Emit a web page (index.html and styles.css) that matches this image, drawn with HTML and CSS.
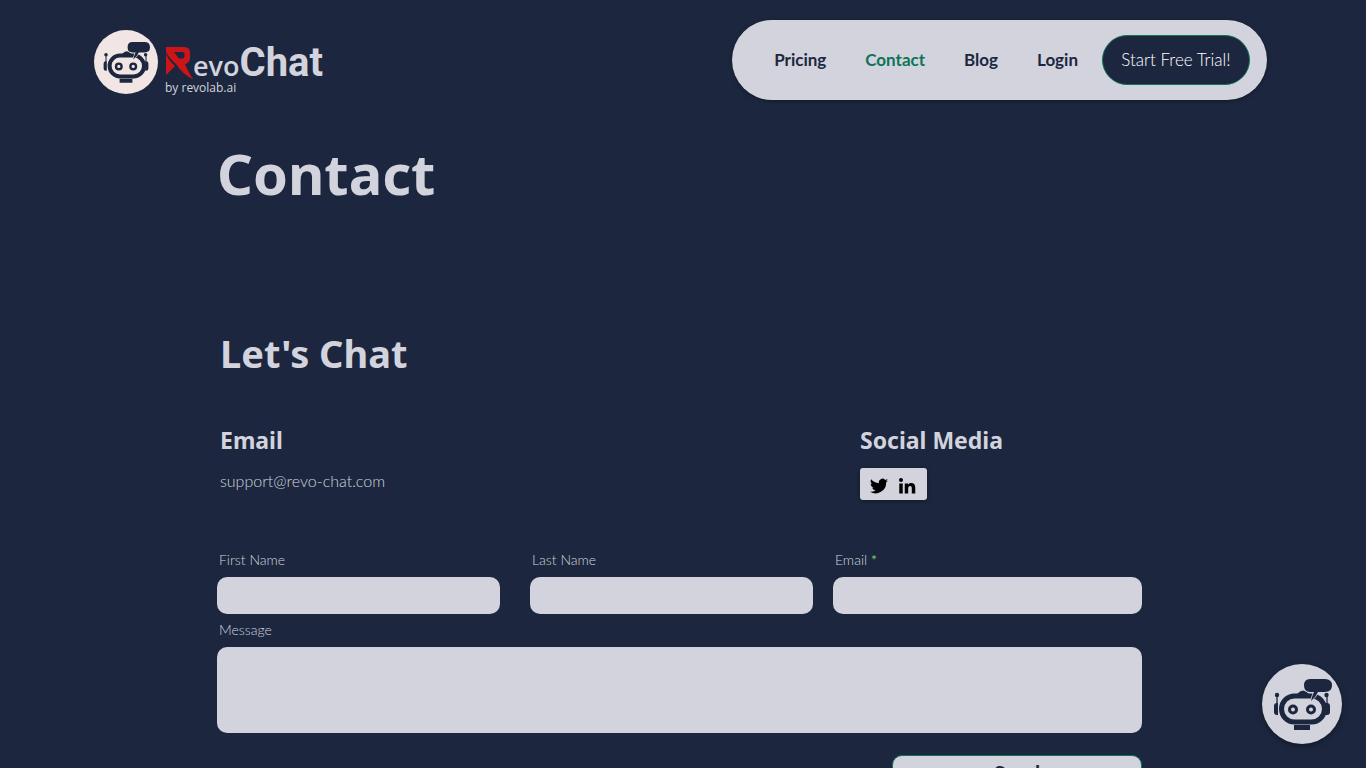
FILE: index.html
```html
<!DOCTYPE html>
<html lang="en">
<head>
<meta charset="utf-8">
<meta name="viewport" content="width=device-width, initial-scale=1">
<title>Contact | RevoChat</title>
<link rel="stylesheet" href="styles.css">
</head>
<body>
<svg width="0" height="0" class="sprite" aria-hidden="true">
  <symbol id="robot" viewBox="0 0 80 80">
    <path d="M35 30q6-7 12 0z" fill="currentColor"/>
    <rect x="19.500" y="32" width="43" height="26" rx="13" fill="none" stroke="currentColor" stroke-width="5"/>
    <circle cx="31" cy="45.500" r="3.500" fill="none" stroke="currentColor" stroke-width="3"/>
    <circle cx="49" cy="45.500" r="3.500" fill="none" stroke="currentColor" stroke-width="3"/>
    <path d="M16 39h-1q-3 0-3 3v6q0 3 3 3h1zM64 39h1q3 0 3 3v6q0 3-3 3h-1z" fill="currentColor"/>
    <path d="M15 40V31M65 40V31" stroke="currentColor" stroke-width="1.300"/>
    <circle cx="15" cy="31" r="2.200" fill="currentColor"/>
    <circle cx="64.500" cy="31" r="2.200" fill="currentColor"/>
    <path d="M32 61h16v5H32z" fill="currentColor"/>
    <path d="M48 15h15q7 0 7 6.500t-7 6.500h-7q-2 5-7 9 1-5 3-9h-4q-6 0-6-6.500t6-6.500z" fill="currentColor" stroke="var(--face)" stroke-width="1.500" paint-order="stroke"/>
  </symbol>
</svg>

<header class="header">
  <a class="brand" href="#" aria-label="RevoChat by revolab.ai">
    <svg class="brand-badge"><use href="#robot"/></svg>
    <span class="brand-text">
      <span class="wordmark">
        <svg class="brand-r" viewBox="0 0 28 33" aria-hidden="true">
          <path d="M1 1h19q5 1 5 5v6q0 5-5 6 3 8 8 15-10-4-17-15Q4 12 1 6z" fill="#cb1518"/>
          <path d="M1 8q3 7 9 12l-9 9z" fill="#cb1518"/>
          <path d="M9 6h9l1.500 1.500V11L18 12.500h-4z" fill="#1c273f"/>
        </svg>
        <span class="evo">evo</span><span class="chat">Chat</span>
      </span>
      <span class="byline">by revolab.ai</span>
    </span>
  </a>
  <nav class="nav">
    <a href="#">Pricing</a>
    <a href="#" class="active" aria-current="page">Contact</a>
    <a href="#">Blog</a>
    <a href="#">Login</a>
    <a href="#" class="trial">Start Free Trial!</a>
  </nav>
</header>

<main class="main">
  <h1>Contact</h1>
  <h2>Let's Chat</h2>
  <div class="info">
    <section>
      <h3>Email</h3>
      <a class="mail" href="mailto:support@revo-chat.com">support@revo-chat.com</a>
    </section>
    <section class="social-block">
      <h3>Social Media</h3>
      <div class="social">
        <a href="#" aria-label="Twitter"><svg viewBox="0 0 24 24"><path d="M24 4.600a10 10 0 0 1-2.800.8 5 5 0 0 0 2.200-2.700 10 10 0 0 1-3.100 1.200 4.900 4.900 0 0 0-8.400 4.500A14 14 0 0 1 1.700 3.100a4.900 4.900 0 0 0 1.500 6.600 5 5 0 0 1-2.200-.6 4.900 4.900 0 0 0 3.900 4.900 5 5 0 0 1-2.200.1 4.900 4.900 0 0 0 4.600 3.400A9.900 9.900 0 0 1 0 19.500 14 14 0 0 0 21.500 7.100 10 10 0 0 0 24 4.600z"/></svg></a>
        <a href="#" aria-label="LinkedIn"><svg viewBox="0 0 24 24"><circle cx="4" cy="4" r="2.700"/><path d="M1.700 8.500h4.600V22H1.700zM9 8.500h4.400v1.900c.8-1.400 2.300-2.300 4.200-2.300 4 0 5.400 2.400 5.400 6.300V22h-4.600v-6.900c0-2-.6-3.100-2.200-3.100-1.800 0-2.600 1.300-2.600 3.200V22H9z"/></svg></a>
      </div>
    </section>
  </div>

  <form class="form">
    <div class="row">
      <div class="names">
        <div class="field">
          <label for="first">First Name</label>
          <input id="first" type="text">
        </div>
        <div class="field">
          <label for="last">Last Name</label>
          <input id="last" type="text">
        </div>
      </div>
      <div class="field email">
        <label for="email">Email <span class="req">*</span></label>
        <input id="email" type="email" required>
      </div>
    </div>
    <div class="field">
      <label for="message">Message</label>
      <textarea id="message"></textarea>
    </div>
    <button class="send" type="submit">Send</button>
  </form>
</main>

<button class="chat-button" type="button" aria-label="Open chat"><svg><use href="#robot"/></svg></button>
</body>
</html>
```
FILE: styles.css
```css
:root {
  --navy: #1c273f;
  --light: #d2d3dc;
  --green: #0d7458;
}

* {
  box-sizing: border-box;
}

body {
  margin: 0;
  background: var(--navy);
  color: var(--light);
  font-family: Lato, "Open Sans", sans-serif;
}

a {
  color: inherit;
  text-decoration: none;
}

.sprite {
  position: absolute;
}

.header {
  display: flex;
  justify-content: space-between;
  align-items: flex-start;
  padding: 20px 99px 0 94px;
}

.brand {
  display: flex;
  gap: 7px;
  padding-top: 10px;
}

.brand-badge {
  --face: #f1e6e4;
  width: 64px;
  height: 64px;
  border-radius: 50%;
  background: var(--face);
  color: var(--navy);
}

.brand-text {
  display: flex;
  flex-direction: column;
  padding-top: 13px;
}

.wordmark {
  display: flex;
  align-items: baseline;
  height: 36px;
  line-height: 40px;
  font-weight: 700;
}

.brand-r {
  width: 28px;
  height: 33px;
  align-self: flex-end;
}

.evo {
  font-family: "Open Sans", sans-serif;
  font-size: 27px;
  font-weight: 600;
}

.chat {
  font-family: Roboto, sans-serif;
  font-size: 40px;
}

.byline {
  font: 12px/18px "Open Sans", sans-serif;
}

.nav {
  display: flex;
  align-items: center;
  gap: 39px;
  height: 80px;
  padding: 0 17px 0 42px;
  border-radius: 40px;
  background: var(--light);
  color: var(--navy);
  font-size: 17px;
  font-weight: 700;
  line-height: 22px;
  box-shadow: 0 1px 4px rgba(0, 0, 0, 0.4);
}

.nav a {
  padding-bottom: 1px;
}

.nav .active {
  color: var(--green);
}

.nav .trial {
  display: flex;
  align-items: center;
  justify-content: center;
  width: 148px;
  height: 50px;
  margin-left: -15px;
  border: 1px solid var(--green);
  border-radius: 25px;
  background: var(--navy);
  color: #fff;
  font-weight: 300;
}

.main {
  max-width: 980px;
  margin: 0 auto;
  padding: 35px 31px 40px 24px;
}

h1,
h2,
h3 {
  margin: 0;
  font-family: "Noto Sans", sans-serif;
  font-weight: 700;
}

h1 {
  font-size: 56px;
  line-height: 76px;
}

h2 {
  margin-top: 116px;
  padding-left: 3px;
  font-size: 38px;
  line-height: 52px;
}

.info {
  display: flex;
  justify-content: space-between;
  margin-top: 45px;
  padding-left: 3px;
}

.social-block {
  width: 282px;
}

h3 {
  font-size: 23px;
  line-height: 32px;
}

.mail {
  display: block;
  margin-top: 13px;
  font-size: 16px;
  font-weight: 300;
  line-height: 24px;
}

.social {
  display: inline-flex;
  gap: 10px;
  margin-top: 12px;
  padding: 9px 11px 5px 10px;
  border-radius: 3px;
  background: var(--light);
  box-shadow: 0 1px 4px rgba(0, 0, 0, 0.4);
}

.social svg {
  display: block;
  width: 18px;
  height: 18px;
  fill: #000;
}

.form {
  display: flex;
  flex-direction: column;
  gap: 5px;
  margin-top: 49px;
}

.row {
  display: flex;
  gap: 20px;
}

.names {
  display: flex;
  flex: 596 1 0;
  gap: 30px;
}

.field {
  display: flex;
  flex: 1 1 0;
  flex-direction: column;
  gap: 6px;
  min-width: 0;
}

.email {
  flex: 309 1 0;
}

label {
  padding-left: 2px;
  font-size: 14px;
  font-weight: 300;
  line-height: 22px;
}

.req {
  color: #6fd35f;
  font-weight: 400;
}

input,
textarea {
  width: 100%;
  height: 37px;
  padding: 0 12px;
  border: 0;
  border-radius: 10px;
  background: var(--light);
  color: var(--navy);
  font: inherit;
}

textarea {
  display: block;
  height: 86px;
  padding: 10px 12px;
  resize: none;
}

.send {
  align-self: flex-end;
  width: 250px;
  height: 36px;
  margin-top: 17px;
  border: 1px solid var(--green);
  border-radius: 10px;
  background: var(--light);
  color: var(--navy);
  font: 700 21px/24px Lato, sans-serif;
}

.chat-button {
  --face: #d2d3dc;
  position: fixed;
  right: 24px;
  bottom: 24px;
  width: 80px;
  height: 80px;
  padding: 0;
  border: 0;
  border-radius: 50%;
  background: var(--face);
  color: var(--navy);
  box-shadow: 0 2px 6px rgba(0, 0, 0, 0.4);
}

.chat-button svg {
  display: block;
  width: 80px;
  height: 80px;
}
```
